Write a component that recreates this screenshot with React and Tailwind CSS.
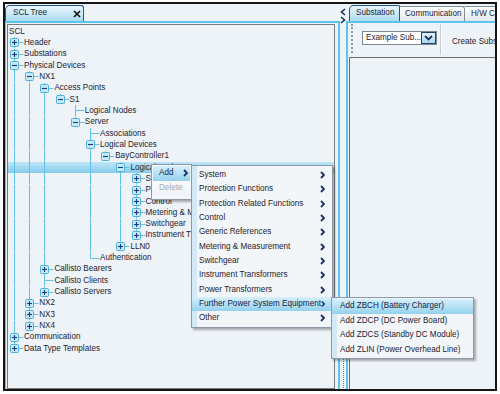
import React from "react";

// [label, level, expander, selected]
const nodes = [
  ["SCL", -1],
  ["Header", 0, "+"],
  ["Substations", 0, "+"],
  ["Physical Devices", 0, "-"],
  ["NX1", 1, "-"],
  ["Access Points", 2, "-"],
  ["S1", 3, "-"],
  ["Logical Nodes", 4],
  ["Server", 4, "-"],
  ["Associations", 5],
  ["Logical Devices", 5, "-"],
  ["BayController1", 6, "-"],
  ["Logical Nodes", 7, "-", true],
  ["System", 8, "+"],
  ["Protection Functions", 8, "+"],
  ["Control", 8, "+"],
  ["Metering & Measurement", 8, "+"],
  ["Switchgear", 8, "+"],
  ["Instrument Transformers", 8, "+"],
  ["LLN0", 7, "+"],
  ["Authentication", 5],
  ["Callisto Bearers", 2, "+"],
  ["Callisto Clients", 2],
  ["Callisto Servers", 2, "+"],
  ["NX2", 1, "+"],
  ["NX3", 1, "+"],
  ["NX4", 1, "+"],
  ["Communication", 0, "+"],
  ["Data Type Templates", 0, "+"],
];

const ROW = 11.33;
const COL = 15.2;

function hasNext(i) {
  const lvl = nodes[i][1];
  for (let j = i + 1; j < nodes.length; j++) {
    if (nodes[j][1] < lvl) return false;
    if (nodes[j][1] === lvl) return true;
  }
  return false;
}

function ancestor(i, lvl) {
  for (let k = i; k >= 0; k--) if (nodes[k][1] === lvl) return k;
  return 0;
}

function TreeRow({ i }) {
  const [label, lvl, exp, sel] = nodes[i];
  const mid = 5.5;
  const lines = [];
  let box = null;
  for (let c = 0; c <= lvl; c++) {
    const x = Math.round(6 + COL * c) + 0.5;
    if (c < lvl) {
      if (hasNext(ancestor(i, c)))
        lines.push(<line key={"v" + c} x1={x} y1={0} x2={x} y2={ROW} />);
    } else {
      lines.push(<line key="t" x1={x} y1={0} x2={x} y2={mid} />);
      if (hasNext(i)) lines.push(<line key="b" x1={x} y1={mid} x2={x} y2={ROW} />);
      lines.push(<line key="h" x1={x} y1={mid} x2={x + 9} y2={mid} />);
      if (exp) {
        box = (
          <g>
            <rect x={x - 4} y={mid - 4} width="8" height="8" rx="1" fill="#c6e8f7" stroke="#4fb0dc" />
            <line x1={x - 2.5} y1={mid} x2={x + 2.5} y2={mid} stroke="#1f3d70" strokeWidth="1.1" />
            {exp === "+" && <line x1={x} y1={mid - 2.5} x2={x} y2={mid + 2.5} stroke="#1f3d70" strokeWidth="1.1" />}
          </g>
        );
      }
    }
  }

  return (
    <div
      className={`relative flex items-center whitespace-nowrap h-[11.33px] ${
        sel ? "bg-gradient-to-b from-[#bfe6f7] to-[#84ccec]" : ""
      }`}
    >
      <svg className="absolute left-0 top-0 overflow-visible" width="320" height={ROW}>
        <g stroke="#62c2e8" strokeWidth="1">{lines}</g>
        {box}
      </svg>
      <span className="relative" style={{ paddingLeft: lvl < 0 ? 1 : 16 + COL * lvl }}>
        {label}
      </span>
    </div>
  );
}

function Chevron() {
  return (
    <svg width="5" height="8" viewBox="0 0 5 8">
      <polyline points="1,1 4,4 1,7" fill="none" stroke="#1b2f63" strokeWidth="1.8" />
    </svg>
  );
}

const addItems = [
  "System",
  "Protection Functions",
  "Protection Related Functions",
  "Control",
  "Generic References",
  "Metering & Measurement",
  "Switchgear",
  "Instrument Transformers",
  "Power Transformers",
  "Further Power System Equipment",
  "Other",
];

const equipItems = [
  "Add ZBCH (Battery Charger)",
  "Add ZDCP (DC Power Board)",
  "Add ZDCS (Standby DC Module)",
  "Add ZLIN (Power Overhead Line)",
];

const hiItem = "bg-gradient-to-b from-[#d6f0fb] to-[#94d1ee]";
const plainItem = "bg-gradient-to-b from-[#fbfdfe] to-[#edf2f6]";

export default function App() {
  return (
    <div className="relative w-[500px] h-[394px] bg-white overflow-hidden font-['Liberation_Sans',Arial,sans-serif] text-[8.15px] text-[#1d2230] leading-none">
      <div className="pl-[3px] pt-[2px]">
        <div className="w-[494px] h-[389px] border-2 border-[#151515] bg-[#eef3f8] flex">
          {/* left pane */}
          <div className="w-[335px] flex flex-col">
            <div className="h-[17px] flex items-end">
              <div className="w-[79px] h-[16px] rounded-tl-[5px] rounded-tr-[3px] border border-b-0 border-[#24548a] bg-gradient-to-b from-[#eaf7fd] to-[#a9dbf1] flex items-center justify-between pl-[7px] pr-[2px]">
                <span>SCL Tree</span>
                <svg width="8" height="8" viewBox="0 0 8 8">
                  <path d="M1 1 L7 7 M7 1 L1 7" stroke="#111" strokeWidth="1.7" />
                </svg>
              </div>
            </div>
            <div className="flex-1 flex border-l border-t-2 border-r-2 border-[#5ec5ea] pl-[1px] pr-[3px] pt-[1px]">
              <div className="flex-1 border border-[#7b7b7b] bg-[#eef3f8] pt-[1px] overflow-hidden">
                {nodes.map((n, i) => (
                  <TreeRow key={i} i={i} />
                ))}
              </div>
            </div>
          </div>

          {/* splitter */}
          <div className="w-[6px] flex flex-col justify-between items-center">
            <svg width="6" height="16" viewBox="0 0 6 16" className="mt-[4px]">
              <polyline points="5,1 1.5,4 5,7" fill="none" stroke="#1b2f63" strokeWidth="1.6" />
              <polyline points="1,9 4.5,12 1,15" fill="none" stroke="#1b2f63" strokeWidth="1.6" />
            </svg>
            <div className="h-[48px] w-0 border-l border-dotted border-[#6f7c88] mb-[1px]" />
          </div>

          {/* right pane */}
          <div className="flex-1 min-w-0 flex flex-col">
            <div className="h-[17px] flex items-end pl-[3px] overflow-hidden whitespace-nowrap">
              <div className="w-[51px] h-[16px] shrink-0 rounded-tl-[5px] rounded-tr-[2px] border border-b-0 border-[#24548a] bg-gradient-to-b from-[#eaf7fd] to-[#a9dbf1] flex items-center pl-[6px]">
                Substation
              </div>
              <div className="w-[65px] h-[15px] shrink-0 rounded-tr-[3px] border border-b-0 border-l-0 border-[#7f8d9b] bg-gradient-to-b from-white to-[#e2e8ee] flex items-center pl-[5px]">
                Communication
              </div>
              <div className="w-[40px] h-[15px] shrink-0 rounded-tr-[3px] border border-b-0 border-l-0 border-[#7f8d9b] bg-gradient-to-b from-white to-[#e2e8ee] flex items-center pl-[6px]">
                H/W Configuration
              </div>
            </div>
            <div className="flex-1 flex flex-col border-l-2 border-t-2 border-[#5ec5ea] overflow-hidden">
              <div className="h-[34px] flex items-start whitespace-nowrap">
                <div className="ml-[3px] mt-[1px] h-[29px] w-0 border-l-2 border-dotted border-[#8c9aa6]" />
                <div className="ml-[9px] mt-[8px] w-[75px] h-[14px] shrink-0 border border-[#7f8a95] bg-white flex items-center justify-between">
                  <span className="pl-[3px]">Example Sub...</span>
                  <div className="w-[16px] h-[12px] border border-[#24406e] bg-gradient-to-b from-[#e6f4fb] to-[#a9d7ee] flex items-center justify-center">
                    <svg width="9" height="6" viewBox="0 0 9 6">
                      <polyline points="1,1 4.5,4.5 8,1" fill="none" stroke="#1b2f63" strokeWidth="1.8" />
                    </svg>
                  </div>
                </div>
                <div className="ml-[3px] mt-[1px] h-[31px] w-[2px] shrink-0 border-l border-r border-l-[#c3cad1] border-r-white" />
                <span className="ml-[10px] mt-[15px]">Create Substation</span>
              </div>
              <div className="flex-1 ml-[1px] border-t border-l border-[#6d6d6d] bg-[#eef3f8]" />
            </div>
          </div>
        </div>
      </div>

      {/* context menu */}
      <div className="absolute left-[151px] top-[164px] w-[41px] border border-[#8d99a6] bg-[#f3f6f9] p-[1px] shadow-[2px_2px_2px_rgba(0,0,0,0.3)]">
        <div className={`h-[14.5px] flex items-center justify-between pl-[6px] pr-[2px] ${hiItem}`}>
          <span className="text-[#14224a]">Add</span>
          <Chevron />
        </div>
        <div className={`h-[14.5px] flex items-center pl-[6px] ${plainItem} text-[#a3abb3]`}>Delete</div>
        <div className="h-[3px]" />
      </div>

      {/* Add submenu */}
      <div className="absolute left-[191px] top-[165px] w-[142px] border border-[#8d99a6] bg-[#f3f6f9] pt-[2px] pb-[1px] shadow-[2px_2px_2px_rgba(0,0,0,0.3)]">
        <div className="absolute left-0 top-0 bottom-0 w-[5px] bg-[#d3eaf6]" />
        {addItems.map((t) => {
          const hi = t === "Further Power System Equipment";
          return (
            <div
              key={t}
              className={`relative h-[14.33px] flex items-center justify-between pl-[7px] pr-[7px] whitespace-nowrap ${
                hi ? hiItem + " text-[#14224a]" : ""
              }`}
            >
              <span>{t}</span>
              <Chevron />
            </div>
          );
        })}
      </div>

      {/* Further equipment submenu */}
      <div className="absolute left-[331px] top-[297px] w-[143px] border border-[#8d99a6] bg-[#f3f6f9] pt-[1px] pb-[1px] shadow-[2px_2px_2px_rgba(0,0,0,0.3)]">
        <div className="absolute left-0 top-0 bottom-0 w-[5px] bg-[#d3eaf6]" />
        {equipItems.map((t, i) => (
          <div
            key={t}
            className={`relative h-[14.5px] flex items-center pl-[8px] whitespace-nowrap ${
              i === 0 ? hiItem + " text-[#14224a]" : ""
            }`}
          >
            {t}
          </div>
        ))}
      </div>
    </div>
  );
}
